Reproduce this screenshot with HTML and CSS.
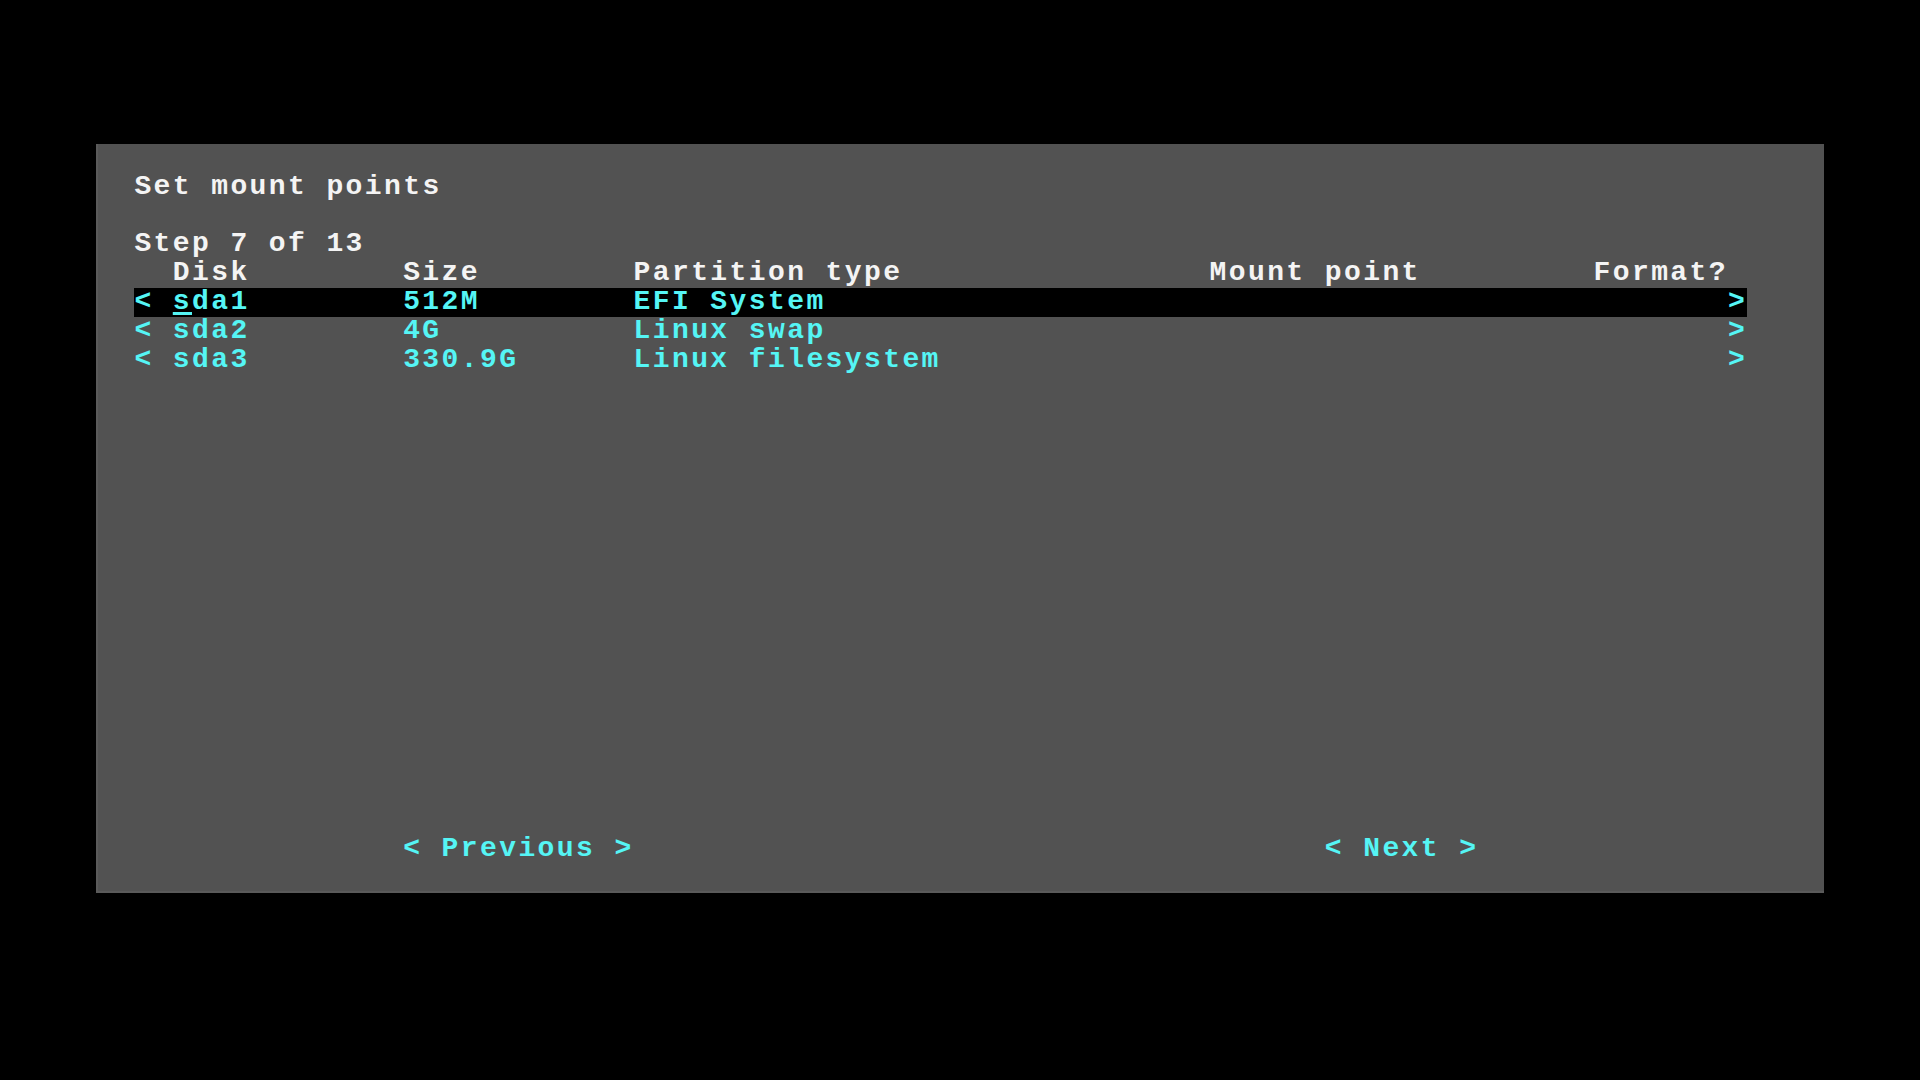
FILE: index.html
```html
<!DOCTYPE html>
<html lang="en">
<head>
<meta charset="utf-8">
<title>Set mount points</title>
<link rel="stylesheet" href="styles.css">
</head>
<body>
<div class="screen">
  <div class="panel">
    <div class="line title">Set mount points</div>
    <div class="line"></div>
    <div class="line">Step 7 of 13</div>
    <div class="table">
      <div class="row head">
        <span></span><span>Disk</span><span>Size</span><span>Partition type</span><span>Mount point</span><span>Format?</span><span></span>
      </div>
      <div class="row item selected">
        <span>&lt;</span><span><span class="cursor">s</span>da1</span><span>512M</span><span>EFI System</span><span></span><span></span><span>&gt;</span>
      </div>
      <div class="row item">
        <span>&lt;</span><span>sda2</span><span>4G</span><span>Linux swap</span><span></span><span></span><span>&gt;</span>
      </div>
      <div class="row item">
        <span>&lt;</span><span>sda3</span><span>330.9G</span><span>Linux filesystem</span><span></span><span></span><span>&gt;</span>
      </div>
    </div>
    <div class="line buttons">
      <span class="btn">&lt; Previous &gt;</span>
      <span class="btn">&lt; Next &gt;</span>
    </div>
  </div>
</div>
</body>
</html>
```

FILE: styles.css
```css
html, body {
  margin: 0;
  padding: 0;
  background: #000;
  width: 1920px;
  height: 1080px;
  overflow: hidden;
}

.screen {
  padding: 144px 0 0 96px;
}

.panel {
  width: 1728px;
  height: 748.8px;
  box-sizing: border-box;
  padding: 28.8px 0 0 38.4px;
  background: #525252;
  box-shadow: inset 2px -2px 0 #5a5a5a;
  display: flex;
  flex-direction: column;
  font-family: "Liberation Mono", "DejaVu Sans Mono", monospace;
  font-weight: bold;
  font-size: 28px;
  letter-spacing: 2.4px;
  line-height: 28.8px;
  color: #f4f4f4;
}

.line {
  height: 28.8px;
  white-space: pre;
}

.table {
  width: 1612.8px;
  display: flex;
  flex-direction: column;
}

.row {
  display: grid;
  grid-template-columns: 38.4px 230.4px 230.4px 576px 384px 134.4px 19.2px;
  height: 28.8px;
}

.row > span {
  white-space: pre;
}

.item {
  color: #55f5f5;
}

.selected {
  background: #000;
}

.cursor {
  text-decoration: underline;
  text-decoration-thickness: 3px;
  text-underline-offset: 3px;
}

.buttons {
  margin-top: auto;
  margin-bottom: 28.8px;
  display: flex;
  gap: 691.2px;
  padding-left: 268.8px;
  color: #55f5f5;
}
```
